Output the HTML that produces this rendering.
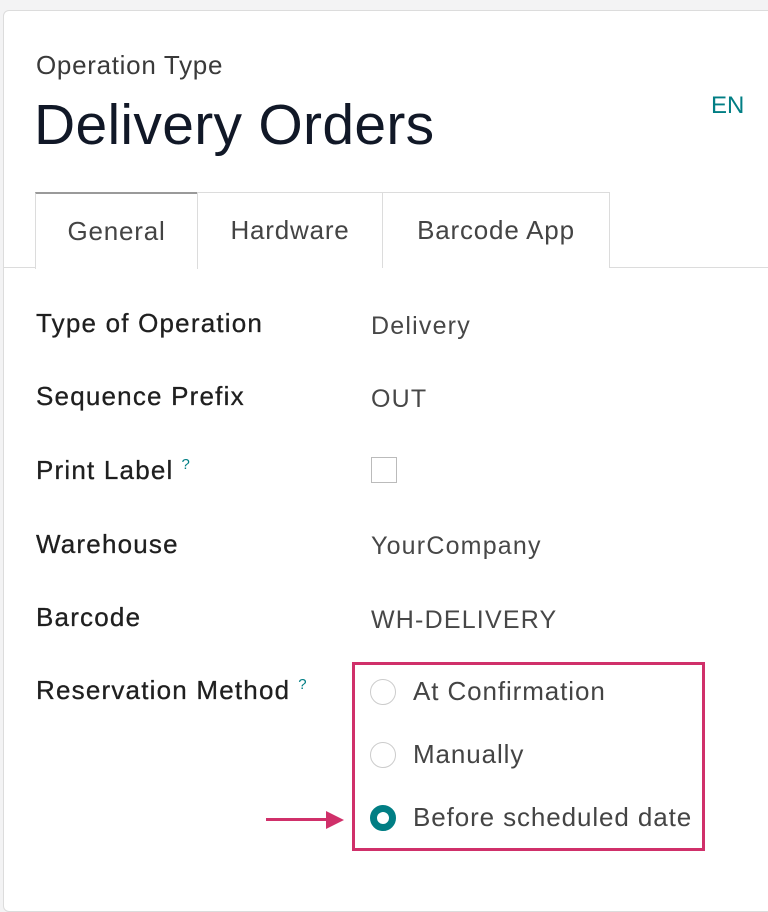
<!DOCTYPE html>
<html><head><style>
body{margin:0;width:768px;height:871px;background:#f3f3f4;font-family:"Liberation Sans",sans-serif;position:relative;overflow:hidden}
.card{position:absolute;left:3px;top:10px;width:780px;height:900px;background:#fff;border:1px solid #dcdcdc;border-radius:6px}
.a{position:absolute;white-space:nowrap}
.lbl{left:36px;font-size:26px;letter-spacing:1.2px;color:#1f1f1f;-webkit-text-stroke:0.3px #1f1f1f}
.val{left:371px;font-size:25px;letter-spacing:1.2px;color:#474747}
.q{font-size:15px;color:#017e84;vertical-align:super;margin-left:8px;-webkit-text-stroke:0}
.tab{position:absolute;top:192px;height:76px;border:1px solid #dcdcdc;border-bottom:none;box-sizing:border-box;font-size:26px;letter-spacing:0.8px;color:#444;display:flex;align-items:center;justify-content:center;background:#fff}
.radio{position:absolute;left:370px;width:26px;height:26px;border-radius:50%;border:1.5px solid #ccc;box-sizing:border-box;background:#fff}
.rl{left:413px;font-size:26px;letter-spacing:0.9px;color:#444}
</style></head><body>
<div class="card"></div>
<div class="a" style="left:36px;top:50px;font-size:26px;letter-spacing:0.7px;color:#3a3a3a">Operation Type</div>
<div class="a" style="left:34px;top:92px;font-size:57px;letter-spacing:0.3px;color:#111827">Delivery Orders</div>
<div class="a" style="left:711px;top:92px;font-size:24px;color:#017e84">EN</div>
<div class="a" style="left:3px;top:267px;width:765px;height:1px;background:#dcdcdc"></div>
<div class="tab" style="left:35px;width:163px;border-top:2px solid #9a9a9a;height:77px">General</div>
<div class="tab" style="left:197px;width:186px">Hardware</div>
<div class="tab" style="left:382px;width:228px">Barcode App</div>
<div class="a lbl" style="top:308px">Type of Operation</div>
<div class="a val" style="top:312px">Delivery</div>
<div class="a lbl" style="top:381px">Sequence Prefix</div>
<div class="a val" style="top:385px">OUT</div>
<div class="a lbl" style="top:455px">Print Label<span class="q">?</span></div>
<div class="a" style="left:371px;top:457px;width:26px;height:26px;border:1.5px solid #bbb;box-sizing:border-box"></div>
<div class="a lbl" style="top:529px">Warehouse</div>
<div class="a val" style="top:532px">YourCompany</div>
<div class="a lbl" style="top:602px">Barcode</div>
<div class="a val" style="top:606px">WH-DELIVERY</div>
<div class="a lbl" style="top:675px">Reservation Method<span class="q">?</span></div>
<div class="a" style="left:352px;top:662px;width:353px;height:189px;border:3px solid #d0306a;box-sizing:border-box"></div>
<div class="radio" style="top:679px"></div>
<div class="a rl" style="top:676px">At Confirmation</div>
<div class="radio" style="top:742px"></div>
<div class="a rl" style="top:739px">Manually</div>
<div class="radio" style="top:805px;border:7px solid #017e84"></div>
<div class="a rl" style="top:802px">Before scheduled date</div>
<div class="a" style="left:266px;top:818px;width:66px;height:3px;background:#d0306a"></div>
<svg class="a" style="left:326px;top:811px" width="18" height="18"><polygon points="0,0 18,9 0,18" fill="#d0306a"/></svg>
</body></html>
